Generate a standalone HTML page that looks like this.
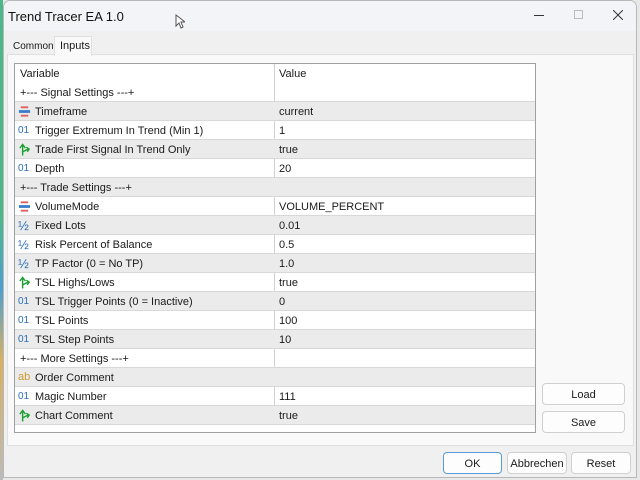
<!DOCTYPE html>
<html><head><meta charset="utf-8"><style>
*{margin:0;padding:0;box-sizing:border-box}
body{width:640px;height:480px;overflow:hidden;background:#e8e8e8;font-family:"Liberation Sans",sans-serif;font-size:11px;color:#1a1a1a;position:relative}
.strip{position:absolute;left:0;top:0;width:3px;height:480px;background:linear-gradient(#4cb88a 0%,#4cb88a 45%,#4aa0d0 60%,#d8b060 75%,#bbb 100%)}
.win{position:absolute;left:3px;top:0;width:634px;height:478px;background:#f0f0f0;border:1px solid #b8b8b8;border-radius:7px 7px 0 0;overflow:hidden}
.title{position:absolute;left:0;top:0;width:100%;height:30px;background:#f3f4f7}
.title span{position:absolute;left:4px;top:8px;font-size:13px;color:#111}
.tab{position:absolute;font-size:11px}
.panel{position:absolute;left:7px;top:54px;width:627px;height:392px;background:#f9f9f9;border:1px solid #e0e0e0}
.grid{position:absolute;left:14px;top:63px;width:522px;height:370px;background:#fff;border:1px solid #a0a0a0}
.row{position:absolute;left:0;width:520px;height:19px;border-bottom:1px solid #d8d8d8}
.g{background:#ebebeb}
.row .n{position:absolute;left:20px;top:4px}
.row .v{position:absolute;left:264px;top:4px}
.row .t{position:absolute;left:5px;top:4px}
.vline{position:absolute;left:259px;top:0;width:1px;height:352px;background:#d0d0d0}
.ic{position:absolute;left:3px;top:3px;width:13px;height:13px}
.i01{position:absolute;left:3px;top:4px;color:#2a70b8;font-size:10px}
.ihalf{position:absolute;left:3px;top:2px;color:#2a70b8;font-size:13px}
.iab{position:absolute;left:3px;top:3px;color:#d09a30;font-size:11px}
.btn{position:absolute;background:#fdfdfd;border:1px solid #d0d0d0;border-radius:4px;text-align:center;font-size:11px;padding-top:5px;height:22px}
</style></head><body>
<div class="strip"></div>
<div class="win">
<div class="title"><span>Trend Tracer EA 1.0</span>
<svg style="position:absolute;left:171px;top:13px" width="10" height="16"><path d="M1 1 L1 12 L4 9 L6 14 L8 13 L6 8 L10 8 Z" fill="#fff" stroke="#555" stroke-width="1"/></svg>
<div style="position:absolute;left:530px;top:14px;width:10px;height:1px;background:#333"></div>
<div style="position:absolute;left:570px;top:9px;width:9px;height:9px;border:1px solid #bbb"></div>
<svg style="position:absolute;left:609px;top:9px" width="10" height="10"><path d="M0 0L10 10M10 0L0 10" stroke="#333" stroke-width="1"/></svg>
</div>
<div class="tab" style="left:9px;top:40px;font-size:10px">Common</div>
<div class="tab" style="left:50px;top:35px;width:38px;height:20px;background:#f9f9f9;border:1px solid #e0e0e0;border-bottom:none;padding:3px 0 0 5px;z-index:2">Inputs</div>
</div>
<div class="panel"></div>
<div class="grid">
<div class="vline"></div>
<div class="row" style="top:0;border-bottom:none"><span class="t">Variable</span><span class="v">Value</span></div>
<div class="row" style="top:19px"><span class="t">+--- Signal Settings ---+</span></div>
<div class="row g" style="top:38px"><svg class="ic" viewBox="0 0 14 13"><rect x="3" y="1" width="8" height="2" fill="#e06060"/><rect x="1" y="5" width="12" height="3" fill="#3a7cc8"/><rect x="3" y="10" width="8" height="2" fill="#e06060"/></svg><span class="n">Timeframe</span><span class="v">current</span></div>
<div class="row" style="top:57px"><span class="i01">01</span><span class="n">Trigger Extremum In Trend (Min 1)</span><span class="v">1</span></div>
<div class="row g" style="top:76px"><svg class="ic" viewBox="0 0 14 13"><path d="M5 13V2M2 5L5 1L8 5M5 9L11 6M9 4L12 6L10 9" stroke="#1aa030" stroke-width="1.5" fill="none"/></svg><span class="n">Trade First Signal In Trend Only</span><span class="v">true</span></div>
<div class="row" style="top:95px"><span class="i01">01</span><span class="n">Depth</span><span class="v">20</span></div>
<div class="row g" style="top:114px"><span class="t">+--- Trade Settings ---+</span></div>
<div class="row" style="top:133px"><svg class="ic" viewBox="0 0 14 13"><rect x="3" y="1" width="8" height="2" fill="#e06060"/><rect x="1" y="5" width="12" height="3" fill="#3a7cc8"/><rect x="3" y="10" width="8" height="2" fill="#e06060"/></svg><span class="n">VolumeMode</span><span class="v">VOLUME_PERCENT</span></div>
<div class="row g" style="top:152px"><span class="ihalf">½</span><span class="n">Fixed Lots</span><span class="v">0.01</span></div>
<div class="row" style="top:171px"><span class="ihalf">½</span><span class="n">Risk Percent of Balance</span><span class="v">0.5</span></div>
<div class="row g" style="top:190px"><span class="ihalf">½</span><span class="n">TP Factor (0 = No TP)</span><span class="v">1.0</span></div>
<div class="row" style="top:209px"><svg class="ic" viewBox="0 0 14 13"><path d="M5 13V2M2 5L5 1L8 5M5 9L11 6M9 4L12 6L10 9" stroke="#1aa030" stroke-width="1.5" fill="none"/></svg><span class="n">TSL Highs/Lows</span><span class="v">true</span></div>
<div class="row g" style="top:228px"><span class="i01">01</span><span class="n">TSL Trigger Points (0 = Inactive)</span><span class="v">0</span></div>
<div class="row" style="top:247px"><span class="i01">01</span><span class="n">TSL Points</span><span class="v">100</span></div>
<div class="row g" style="top:266px"><span class="i01">01</span><span class="n">TSL Step Points</span><span class="v">10</span></div>
<div class="row" style="top:285px"><span class="t">+--- More Settings ---+</span></div>
<div class="row g" style="top:304px"><span class="iab">ab</span><span class="n">Order Comment</span></div>
<div class="row" style="top:323px"><span class="i01">01</span><span class="n">Magic Number</span><span class="v">111</span></div>
<div class="row g" style="top:342px"><svg class="ic" viewBox="0 0 14 13"><path d="M5 13V2M2 5L5 1L8 5M5 9L11 6M9 4L12 6L10 9" stroke="#1aa030" stroke-width="1.5" fill="none"/></svg><span class="n">Chart Comment</span><span class="v">true</span></div>
</div>
<div class="btn" style="left:542px;top:383px;width:83px">Load</div>
<div class="btn" style="left:542px;top:411px;width:83px">Save</div>
<div class="btn" style="left:443px;top:452px;width:59px;border-color:#5a9ad8">OK</div>
<div class="btn" style="left:507px;top:452px;width:60px">Abbrechen</div>
<div class="btn" style="left:571px;top:452px;width:60px">Reset</div>
</body></html>
